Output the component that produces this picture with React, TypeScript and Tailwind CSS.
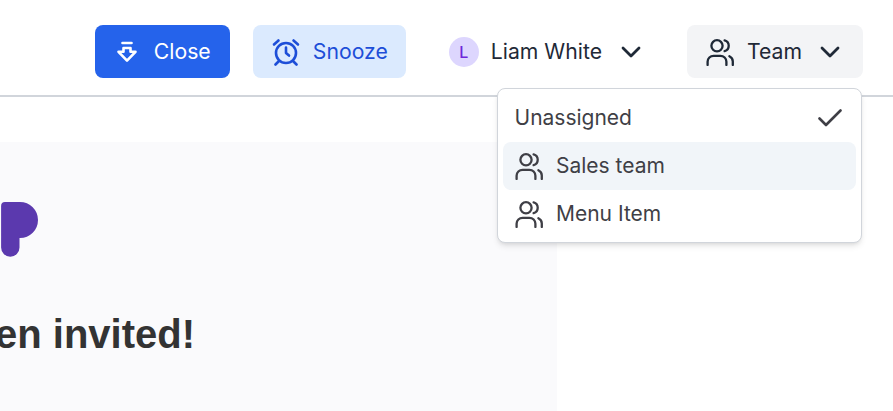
import React from "react";

const Users = ({ className = "" }: { className?: string }) => (
  <svg className={className} viewBox="0 0 28 28" fill="none" stroke="currentColor" strokeWidth="2.3" strokeLinecap="round" strokeLinejoin="round">
    <circle cx="11" cy="7.8" r="5.6" />
    <path d="M1.6 27v-3.2a6 6 0 0 1 6-6h6.8a6 6 0 0 1 6 6V27" />
    <path d="M18.6 2.4a5.6 5.6 0 0 1 0 10.8" />
    <path d="M23.4 18.2a6 6 0 0 1 3.4 5.4V27" />
  </svg>
);

const Chevron = () => (
  <svg className="w-[20px] h-[12px]" viewBox="0 0 20 12" fill="none" stroke="currentColor" strokeWidth="2.8" strokeLinecap="round" strokeLinejoin="round">
    <path d="M2 2l8 8 8-8" />
  </svg>
);

const CloseIcon = () => (
  <svg className="w-[22px] h-[22px]" viewBox="0 0 22 22" fill="none" stroke="currentColor" strokeWidth="2.6" strokeLinejoin="round" strokeLinecap="round">
    <path d="M6.5 2h9" />
    <path d="M7.5 7h7v3.8h5L11 19.6 2.5 10.8h5z" />
  </svg>
);

const AlarmIcon = () => (
  <svg className="w-[28px] h-[28px]" viewBox="0 0 28 28" fill="none" stroke="currentColor" strokeWidth="2.6" strokeLinecap="round" strokeLinejoin="round">
    <circle cx="14" cy="15" r="10" />
    <path d="M14 9.5V15l3 2.6" />
    <path d="M2 6.5 6.5 2.5" />
    <path d="M26 6.5 21.5 2.5" />
    <path d="M6.5 23.5 3.5 26.5" />
    <path d="M21.5 23.5 24.5 26.5" />
  </svg>
);

export default function App() {
  return (
    <div className="relative w-[893px] h-[411px] overflow-hidden bg-white font-['Inter',sans-serif] text-[21.2px]">
      <header className="flex items-center justify-end h-[97px] border-b-2 border-[#d1d5db] pr-[30px] pt-[8px]">
        <button className="flex items-center h-[53px] w-[135px] pl-[21px] gap-[16px] rounded-lg bg-[#2563eb] text-white">
          <CloseIcon />
          <span>Close</span>
        </button>
        <button className="flex items-center h-[53px] w-[153px] ml-[23px] pl-[19px] gap-[13px] rounded-lg bg-[#dbeafe] text-[#1d4ed8]">
          <AlarmIcon />
          <span>Snooze</span>
        </button>
        <button className="flex items-center h-[53px] ml-[43px] gap-[12px] text-[#1f2937]">
          <span className="flex items-center justify-center w-[30px] h-[30px] rounded-full bg-[#ddd6fe] text-[#6d28d9] text-[16px] font-medium">L</span>
          <span>Liam White</span>
          <span className="ml-[7px] flex"><Chevron /></span>
        </button>
        <button className="flex items-center h-[53px] w-[176px] ml-[46px] pl-[19px] gap-[13px] rounded-lg bg-[#f3f4f6] text-[#1f2937]">
          <Users className="w-[28px] h-[28px]" />
          <span>Team</span>
          <span className="ml-[5px] flex"><Chevron /></span>
        </button>
      </header>

      <main className="pt-[45px] h-[314px]">
        <section className="w-[557px] h-[269px] bg-[#fafafc] overflow-hidden flex flex-col items-end pr-[362px]">
          <div className="mt-[59px] w-[40px] self-start">
            <svg className="w-[38px] h-[56px]" viewBox="0 0 38 56" fill="#5b39ae">
              <path d="M5 1h15a18 18 0 0 1 0 36h-0.500v9.500a9.200 9.200 0 0 1-18.400 0V5a4 4 0 0 1 3.900-4z" />
            </svg>
          </div>
          <h1 className="mt-[54px] whitespace-nowrap font-['Liberation_Sans',sans-serif] font-bold text-[40px] leading-[46px] text-[#333333]">
            You have been invited!
          </h1>
        </section>
      </main>

      <div className="absolute left-[497px] top-[88px] w-[365px] h-[155px] rounded-lg border border-[#d1d5db] bg-white shadow-md p-[5px] text-[21px] text-[#3f3f46]">
        <div className="flex items-center justify-between h-[48px] pl-[11.500px] pr-[14px]">
          <span>Unassigned</span>
          <svg className="w-[24px] h-[18px]" viewBox="0 0 24 18" fill="none" stroke="currentColor" strokeWidth="2.6" strokeLinecap="round" strokeLinejoin="round">
            <path d="M1.500 9.500l6.500 6.500L22.500 1.500" />
          </svg>
        </div>
        <div className="flex items-center h-[48px] pl-[12px] gap-[13px] rounded-lg bg-[#f1f5f9]">
          <Users className="w-[28px] h-[28px]" />
          <span>Sales team</span>
        </div>
        <div className="flex items-center h-[48px] pl-[12px] gap-[13px]">
          <Users className="w-[28px] h-[28px]" />
          <span>Menu Item</span>
        </div>
      </div>
    </div>
  );
}
